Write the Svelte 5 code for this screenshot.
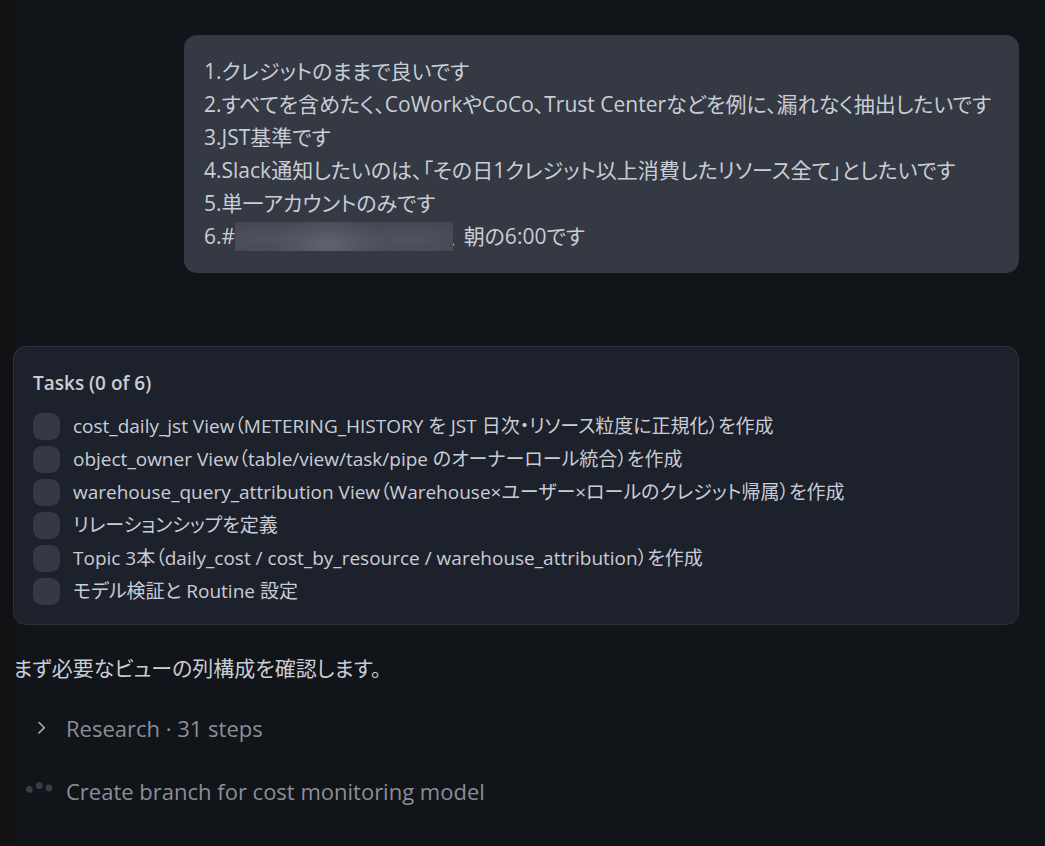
<script lang="ts">
  let tasks = $state([
    { label: 'cost_daily_jst View（METERING_HISTORY を JST 日次・リソース粒度に正規化）を作成', done: false },
    { label: 'object_owner View（table/view/task/pipe のオーナーロール統合）を作成', done: false },
    { label: 'warehouse_query_attribution View（Warehouse×ユーザー×ロールのクレジット帰属）を作成', done: false },
    { label: 'リレーションシップを定義', done: false },
    { label: 'Topic 3本（daily_cost / cost_by_resource / warehouse_attribution）を作成', done: false },
    { label: 'モデル検証と Routine 設定', done: false }
  ]);
  let doneCount = $derived(tasks.filter((t) => t.done).length);
  let researchOpen = $state(false);
</script>

<main class="chat" lang="ja">
  <div class="bubble">
    <p>1.クレジットのままで良いです</p>
    <p>2.すべてを含めたく、CoWorkやCoCo、Trust Centerなどを例に、漏れなく抽出したいです</p>
    <p>3.JST基準です</p>
    <p>4.Slack通知したいのは、「その日1クレジット以上消費したリソース全て」としたいです</p>
    <p>5.単一アカウントのみです</p>
    <p class="channel">6.#<span class="redacted"></span><span class="comma">、</span>朝の6:00です</p>
  </div>

  <section class="tasks">
    <h2>Tasks ({doneCount} of {tasks.length})</h2>
    <ul>
      {#each tasks as task, i}
        <li>
          <input id="task-{i}" type="checkbox" bind:checked={task.done} />
          <label for="task-{i}">{task.label}</label>
        </li>
      {/each}
    </ul>
  </section>

  <p class="reply">まず必要なビューの列構成を確認します。</p>

  <button type="button" class="step" aria-expanded={researchOpen} onclick={() => (researchOpen = !researchOpen)}>
    <svg class="step-icon" class:open={researchOpen} viewBox="0 0 28 28" fill="none" stroke="currentColor" stroke-width="1.6" stroke-linecap="round" stroke-linejoin="round"><path d="M13 7.5l5.3 5.2L13 17.9"/></svg>
    Research · 31 steps
  </button>

  <div class="step">
    <svg class="step-icon dots" viewBox="0 0 28 28" fill="currentColor"><circle cx="3.3" cy="11.4" r="3.4"/><circle cx="13.2" cy="7.7" r="3.4"/><circle cx="22.9" cy="9.9" r="3.4"/></svg>
    Create branch for cost monitoring model
  </div>
</main>

<style>
  :global(body) {
    background: #111419;
  }

  .chat {
    min-height: 100vh;
    box-sizing: border-box;
    padding: 35px 26px 38px 13px;
    display: flex;
    flex-direction: column;
    align-items: flex-start;
    background: linear-gradient(90deg, #121215 16px, #111419 17px);
    color: #c9cdd6;
    font-family: 'Open Sans', 'Noto Sans CJK JP', sans-serif;
    font-feature-settings: 'palt';
    font-size: 22px;
    line-height: 33px;
  }

  p {
    margin: 0;
    font-size: 21px;
  }

  .bubble {
    align-self: flex-end;
    width: 83%;
    box-sizing: border-box;
    margin-bottom: 73px;
    padding: 20px;
    border-radius: 13px;
    background: #343944;
  }

  .channel {
    display: flex;
    align-items: center;
  }

  /* sits over the start of the comma that follows it */
  .redacted {
    z-index: 1;
    width: 218px;
    height: 29px;
    margin-right: -6px;
    background:
      radial-gradient(ellipse 60px 30px at 43% 80%, #5f646e, transparent),
      radial-gradient(ellipse 70px 20px at 14% 60%, #4e525d, transparent),
      radial-gradient(ellipse 70px 20px at 80% 60%, #50545f, transparent),
      #434751;
  }

  .tasks {
    align-self: stretch;
    padding: 19px;
    margin-bottom: 27px;
    border: 1px solid #2c313b;
    border-radius: 13px;
    background: #1d212b;
  }

  .comma {
    margin-right: 6px;
  }

  h2 {
    margin: 0 0 12px;
    font-size: 19px;
    font-weight: 600;
    line-height: 35px;
  }

  ul {
    display: flex;
    flex-direction: column;
    gap: 6px;
    margin: 0;
    padding: 0;
    list-style: none;
  }

  li {
    display: flex;
    align-items: center;
    gap: 13px;
    font-size: 19px;
    line-height: 27px;
  }

  input[type='checkbox'] {
    appearance: none;
    flex-shrink: 0;
    width: 27px;
    height: 27px;
    margin: 0;
    border-radius: 9px;
    background: #343944;
    cursor: pointer;
  }
  input[type='checkbox']:checked { background: #5b6475; }

  .reply {
    margin-bottom: 27px;
  }

  .step {
    display: flex;
    align-items: center;
    gap: 12px;
    margin: 0 0 30px;
    padding: 0 0 0 13px;
    border: none;
    background: none;
    color: #8b8e98;
    font: inherit;
    text-align: left;
  }
  button.step { cursor: pointer; }
  .step:last-child { margin-bottom: 0; }

  .step-icon {
    flex-shrink: 0;
    width: 28px;
    height: 28px;
    color: #a9adb7;
  }
  .step-icon.open { transform: rotate(90deg); }
  .step-icon.dots { color: #373d48; }
</style>
